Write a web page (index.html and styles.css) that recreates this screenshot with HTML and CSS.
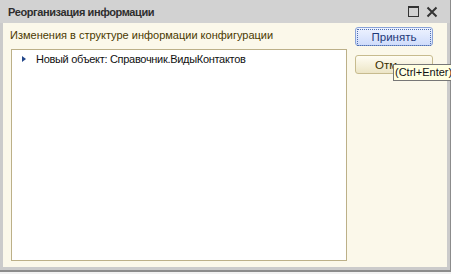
FILE: index.html
```html
<!DOCTYPE html>
<html lang="ru">
<head>
    <meta charset="UTF-8">
    <title>Реорганизация информации</title>
    <link rel="stylesheet" href="styles.css">
</head>
<body>
    <div class="window">
        <div class="titlebar">
            <span class="title">Реорганизация информации</span>
            <div class="controls">
                <span class="maximize"></span>
                <svg class="close" width="12" height="12" viewBox="0 0 12 12">
                    <path d="M1.5 1.5 L10.5 10.5 M10.5 1.5 L1.5 10.5" stroke="#333" stroke-width="2"/>
                </svg>
            </div>
        </div>
        <div class="content">
            <div class="main">
                <div class="label">Изменения в структуре информации конфигурации</div>
                <div class="tree">
                    <div class="tree-row">
                        <span class="arrow"></span>
                        <span>Новый объект: Справочник.ВидыКонтактов</span>
                    </div>
                </div>
            </div>
            <div class="buttons">
                <button class="btn primary"><span class="focus">Принять</span></button>
                <button class="btn">Отм</button>
            </div>
        </div>
    </div>
    <div class="tooltip">(Ctrl+Enter)</div>
    <div class="below"></div>
</body>
</html>
```

FILE: styles.css
```css
body {
    margin: 0;
    width: 451px;
    height: 274px;
    overflow: hidden;
    background-color: #fff;
    font-family: "Liberation Sans", Arial, sans-serif;
    font-size: 11px;
    position: relative;
}
.window {
    width: 444px;
    height: 267px;
    background-color: #cbcbcb;
    border-right: 2px solid #8c8c8c;
    border-bottom: 2px solid #8c8c8c;
    padding: 0 3px 3px 3px;
    display: flex;
    flex-direction: column;
}
.titlebar {
    height: 23px;
    display: flex;
    align-items: center;
    justify-content: space-between;
    background-color: #d2d2d2;
    margin: 0 -3px;
    padding: 0 12px 0 8px;
}
.title {
    font-weight: bold;
    color: #2e2e2e;
    font-size: 11px;
    letter-spacing: -0.4px;
}
.controls {
    display: flex;
    align-items: center;
    gap: 7px;
}
.maximize {
    width: 9px;
    height: 8px;
    border: 1.5px solid #333;
    border-top-width: 2.5px;
}
.content {
    flex: 1;
    background-color: #fbf8ea;
    display: flex;
    padding: 0 0 6px 7px;
}
.main {
    width: 337px;
    display: flex;
    flex-direction: column;
}
.label {
    color: #4a3a00;
    height: 25px;
    line-height: 23px;
    padding-top: 1px;
}
.tree {
    flex: 1;
    background-color: #fff;
    border: 1px solid #bcb088;
    margin-left: 1px;
}
.tree-row {
    display: flex;
    align-items: center;
    gap: 10px;
    padding: 3px 0 0 10px;
    color: #111;
    letter-spacing: -0.3px;
}
.arrow {
    width: 0;
    height: 0;
    border-top: 3px solid transparent;
    border-bottom: 3px solid transparent;
    border-left: 4px solid #23478a;
}
.buttons {
    display: flex;
    flex-direction: column;
    gap: 9px;
    margin-left: 8px;
    padding-top: 4px;
}
.btn {
    width: 78px;
    height: 19px;
    padding: 0 0 0 19px;
    font-family: "Liberation Sans", Arial, sans-serif;
    font-size: 11.5px;
    color: #3a3000;
    border: 1px solid #c7bb8e;
    border-radius: 3px;
    background: linear-gradient(#fffdf3, #ece5c6);
    text-align: left;
}
.btn.primary {
    color: #1e3878;
    border-color: #8aa3d8;
    background: linear-gradient(#eef3ff, #cfdcfb);
    padding: 1px;
}
.focus {
    display: block;
    height: 15px;
    line-height: 15px;
    border: 1px dotted #5070b0;
    text-align: center;
}
.tooltip {
    position: absolute;
    left: 393px;
    top: 64px;
    width: 70px;
    height: 15px;
    line-height: 15px;
    padding-left: 1px;
    background-color: #ffffe1;
    border: 1px solid #777;
    color: #111;
    font-size: 11px;
}
.below {
    height: 2px;
    background-color: #f2f2f2;
}
```
